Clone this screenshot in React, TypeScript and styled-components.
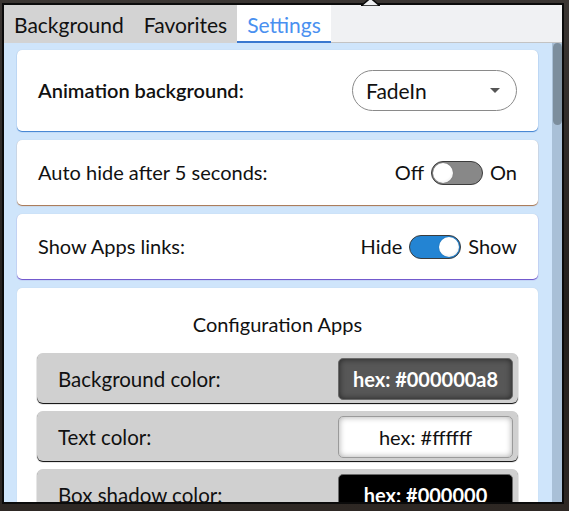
import React from "react";
import styled, { createGlobalStyle } from "styled-components";

const GlobalStyle = createGlobalStyle`
  html, body { margin: 0; padding: 0; }
  body {
    width: 569px;
    height: 511px;
    overflow: hidden;
    background: linear-gradient(180deg, #3b3633 0%, #24201d 60%, #2e2824 100%);
    font-family: Lato, "Open Sans", "Liberation Sans", sans-serif;
    color: #111;
  }
`;

const Stage = styled.div`
  width: 569px;
  height: 511px;
  padding: 3px 0 0 2px;
  box-sizing: border-box;
`;

const Popup = styled.div`
  position: relative;
  width: 562px;
  height: 501px;
  border: 2px solid #0b0b0b;
  box-sizing: border-box;
  display: flex;
  flex-direction: column;
  background: #cfe5fb;
`;

const Notch = styled.svg`
  position: absolute;
  left: 357px;
  top: -7px;
`;

const TabBar = styled.div`
  height: 38px;
  flex: none;
  display: flex;
  background: #f0f1f3;
  box-sizing: border-box;
  border-bottom: 1px solid #c3c3c3;
`;

const Tab = styled.div<{ $active?: boolean }>`
  display: flex;
  align-items: center;
  padding: 0 10px;
  font-size: 21px;
  background: ${(p) => (p.$active ? "#ffffff" : "#d3d3d3")};
  color: ${(p) => (p.$active ? "#4a90f0" : "#111")};
  box-shadow: ${(p) => (p.$active ? "inset 0 -2px 0 #3a78cf" : "none")};
  margin-bottom: -1px;
`;

const Body = styled.div`
  flex: 1;
  display: flex;
  min-height: 0;
`;

const Scroller = styled.div`
  flex: 1;
  overflow: hidden;
  padding: 7px 14px 0 13px;
  display: flex;
  flex-direction: column;
  gap: 9px;
`;

const Track = styled.div`
  width: 10px;
  flex: none;
  background: #a9c0d7;
  display: flex;
  flex-direction: column;
  align-items: center;
`;

const Thumb = styled.div`
  width: 9px;
  height: 82px;
  border-radius: 5px;
  background: #7c8e9d;
`;

const Card = styled.div<{ $accent: string; $pad: number }>`
  flex: none;
  background: #fff;
  border-radius: 5px;
  box-shadow: 0 1px 1px ${(p) => p.$accent}, 0 0 1px rgba(0, 0, 0, 0.15);
  padding: ${(p) => p.$pad}px 21px;
  display: flex;
  align-items: center;
  justify-content: space-between;
`;

const Label = styled.span<{ $strong?: boolean }>`
  font-size: 20px;
  font-weight: ${(p) => (p.$strong ? 600 : 400)};
  line-height: 25px;
`;

const Select = styled.div`
  width: 165px;
  height: 41px;
  box-sizing: border-box;
  border: 1px solid #8a8a8a;
  border-radius: 21px;
  padding: 0 16px 0 13px;
  display: flex;
  align-items: center;
  justify-content: space-between;
  font-size: 21px;
`;

const Caret = styled.span`
  width: 0;
  height: 0;
  border-left: 5px solid transparent;
  border-right: 5px solid transparent;
  border-top: 5px solid #555;
`;

const SwitchGroup = styled.div`
  display: flex;
  align-items: center;
  gap: 7px;
  font-size: 20px;
  line-height: 25px;
`;

const Switch = styled.div<{ $on?: boolean }>`
  width: 52px;
  height: 24px;
  box-sizing: border-box;
  border: 1px solid #3c3c3c;
  border-radius: 12px;
  padding: 1px;
  background: ${(p) => (p.$on ? "#2384d3" : "#888888")};
  display: flex;
  justify-content: ${(p) => (p.$on ? "flex-end" : "flex-start")};
`;

const Knob = styled.div`
  width: 20px;
  height: 20px;
  border-radius: 50%;
  background: radial-gradient(circle at 45% 40%, #ffffff 55%, #dcdcdc 100%);
  box-shadow: 0 0 1px rgba(0, 0, 0, 0.4);
`;

const AppsCard = styled.div`
  flex: none;
  background: #fff;
  border-radius: 5px;
  box-shadow: 0 0 1px rgba(0, 0, 0, 0.15);
  padding: 24px 20px 0;
  display: flex;
  flex-direction: column;
  gap: 8px;
`;

const Title = styled.div`
  text-align: center;
  font-size: 20px;
  line-height: 24px;
  margin-bottom: 9px;
`;

const ColorRow = styled.div`
  height: 50px;
  box-sizing: border-box;
  background: #d0d0d0;
  border-radius: 6px;
  box-shadow: 0 1px 1px #000;
  padding: 5px 5px 3px 21px;
  display: flex;
  align-items: center;
  justify-content: space-between;
  font-size: 20.5px;
`;

const Hex = styled.div<{ $bg: string; $dark?: boolean }>`
  width: 175px;
  height: 42px;
  box-sizing: border-box;
  border-radius: 5px;
  border: 1px solid ${(p) => (p.$dark ? "#6a6a6a" : "#9a9a9a")};
  background: ${(p) => p.$bg};
  box-shadow: inset 0 0 6px ${(p) => (p.$dark ? "rgba(0,0,0,0.6)" : "rgba(0,0,0,0.35)")};
  color: ${(p) => (p.$dark ? "#fff" : "#111")};
  font-weight: ${(p) => (p.$dark ? 700 : 400)};
  font-size: 20px;
  display: flex;
  align-items: center;
  justify-content: center;
`;

const colors = [
  { label: "Background color:", hex: "#000000a8", bg: "#575757", dark: true },
  { label: "Text color:", hex: "#ffffff", bg: "#ffffff", dark: false },
  { label: "Box shadow color:", hex: "#000000", bg: "#000000", dark: true },
];

export default function App() {
  return (
    <>
      <GlobalStyle />
      <Stage>
        <Popup>
          <Notch width="19" height="8" viewBox="0 0 19 8">
            <polygon points="0,8 9.5,0 19,8" fill="#f0f1f3" stroke="#0b0b0b" strokeWidth="1.5" />
          </Notch>
          <TabBar>
            <Tab>Background</Tab>
            <Tab>Favorites</Tab>
            <Tab $active>Settings</Tab>
          </TabBar>
          <Body>
            <Scroller>
              <Card $accent="#3b7fd0" $pad={20}>
                <Label $strong>Animation background:</Label>
                <Select>
                  <span>FadeIn</span>
                  <Caret />
                </Select>
              </Card>
              <Card $accent="#a8734b" $pad={20}>
                <Label>Auto hide after 5 seconds:</Label>
                <SwitchGroup>
                  <span>Off</span>
                  <Switch>
                    <Knob />
                  </Switch>
                  <span>On</span>
                </SwitchGroup>
              </Card>
              <Card $accent="#6a4cc9" $pad={20}>
                <Label>Show Apps links:</Label>
                <SwitchGroup>
                  <span>Hide</span>
                  <Switch $on>
                    <Knob />
                  </Switch>
                  <span>Show</span>
                </SwitchGroup>
              </Card>
              <AppsCard>
                <Title>Configuration Apps</Title>
                {colors.map((c) => (
                  <ColorRow key={c.label}>
                    <span>{c.label}</span>
                    <Hex $bg={c.bg} $dark={c.dark}>
                      hex: {c.hex}
                    </Hex>
                  </ColorRow>
                ))}
              </AppsCard>
            </Scroller>
            <Track>
              <Thumb />
            </Track>
          </Body>
        </Popup>
      </Stage>
    </>
  );
}
